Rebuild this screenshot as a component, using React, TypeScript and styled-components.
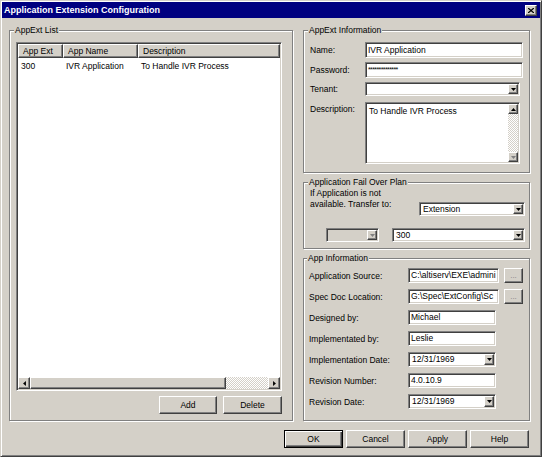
import React from 'react';
import styled, { createGlobalStyle, css } from 'styled-components';

const FACE = '#d4d0c8';
const SHADOW = '#808080';
const DARK = '#404040';

const GlobalStyle = createGlobalStyle`
  html, body {
    margin: 0;
    padding: 0;
    background: #fff;
  }
  body {
    font-family: "Liberation Sans", Arial, sans-serif;
    font-size: 8.5px;
    color: #000;
  }
  * {
    box-sizing: border-box;
  }
`;

const raised = css`
  background: ${FACE};
  border-style: solid;
  border-width: 1px;
  border-color: #fff ${DARK} ${DARK} #fff;
  box-shadow: inset -1px -1px 0 ${SHADOW};
`;

const sunken = css`
  border-style: solid;
  border-width: 1px;
  border-color: ${SHADOW} #fff #fff ${SHADOW};
  box-shadow: inset 1px 1px 0 ${DARK}, inset -1px -1px 0 ${FACE};
`;

const checker = css`
  background: repeating-conic-gradient(#fff 0 25%, ${FACE} 0 50%) 0 0 / 2px 2px;
`;

function Arrow({ dir, off }: { dir: 'up' | 'down' | 'left' | 'right'; off?: boolean }) {
  const pts = {
    down: '0,0 7,0 3.5,4',
    up: '0,4 7,4 3.5,0',
    left: '4,0 4,7 0,3.5',
    right: '0,0 0,7 4,3.5',
  }[dir];
  const vertical = dir === 'up' || dir === 'down';
  return (
    <svg
      width={vertical ? 5 : 3}
      height={vertical ? 3 : 5}
      viewBox={vertical ? '0 0 7 4' : '0 0 4 7'}
      style={{ display: 'block' }}
    >
      <polygon points={pts} fill={off ? SHADOW : '#000'} />
    </svg>
  );
}

const Window = styled.div`
  width: 542px;
  height: 457px;
  background: ${FACE};
  border-style: solid;
  border-width: 1px;
  border-color: ${FACE} ${DARK} ${DARK} ${FACE};
  box-shadow: inset 1px 1px 0 #fff, inset -1px -1px 0 ${SHADOW};
  padding: 1px;
  display: flex;
  flex-direction: column;
`;

const TitleBar = styled.div`
  height: 16px;
  background: #000080;
  display: flex;
  align-items: center;
  justify-content: space-between;
  padding: 0 3px 0 2px;
`;

const Title = styled.span`
  color: #fff;
  font-weight: bold;
  font-size: 9px;
`;

const CloseBtn = styled.div`
  ${raised};
  width: 12px;
  height: 11px;
  display: flex;
  align-items: center;
  justify-content: center;
`;

const Body = styled.div`
  padding: 7px 10px 0 7px;
  display: flex;
  flex-direction: column;
`;

const Main = styled.div`
  display: flex;
  gap: 10px;
`;

const Group = styled.fieldset<{ $w: number; $h: number; $pad: string }>`
  margin: 0;
  min-width: 0;
  width: ${(p) => p.$w}px;
  height: ${(p) => p.$h}px;
  padding: ${(p) => p.$pad};
  border: 1px solid ${SHADOW};
  box-shadow: inset 1px 1px 0 #fff, 1px 1px 0 #fff;
  display: flex;
  flex-direction: column;
`;

const Legend = styled.legend`
  font-size: 8.5px;
  line-height: 10px;
  padding: 0 1px;
  margin-left: -2px;
  background: ${FACE};
`;

const RightCol = styled.div`
  display: flex;
  flex-direction: column;
  gap: 4px;
`;

/* list view */

const ListBox = styled.div`
  ${sunken};
  background: #fff;
  flex: 1;
  min-height: 0;
  padding: 1px;
  display: flex;
  flex-direction: column;
`;

const Cols = css`
  display: grid;
  grid-template-columns: 45px 75px 1fr;
`;

const HeaderRow = styled.div`
  ${Cols};
  height: 14px;
`;

const HeaderCell = styled.div`
  ${raised};
  padding-left: 4px;
  line-height: 12px;
  white-space: nowrap;
  overflow: hidden;
`;

const ListRow = styled.div`
  ${Cols};
  height: 13px;
  line-height: 13px;
  margin-top: 2px;
`;

const ListCell = styled.div`
  padding-left: 3px;
  white-space: nowrap;
`;

const Filler = styled.div`
  flex: 1;
`;

const HScroll = styled.div`
  display: flex;
  height: 12px;
`;

const ScrollBtn = styled.div<{ $w?: number; $h?: number }>`
  ${raised};
  width: ${(p) => (p.$w ? `${p.$w}px` : 'auto')};
  height: ${(p) => (p.$h ? `${p.$h}px` : 'auto')};
  flex-shrink: 0;
  display: flex;
  align-items: center;
  justify-content: center;
`;

const Thumb = styled.div<{ $size: number }>`
  ${raised};
  flex: 0 0 ${(p) => p.$size}px;
`;

const Track = styled.div`
  ${checker};
  flex: 1;
`;

const ButtonRow = styled.div<{ $gap: number }>`
  display: flex;
  justify-content: flex-end;
  gap: ${(p) => p.$gap}px;
  margin-top: 5px;
`;

const Btn = styled.button<{ $w: number; $default?: boolean }>`
  ${raised};
  width: ${(p) => p.$w}px;
  height: 18px;
  padding: 0;
  font: inherit;
  font-size: 8.5px;
  color: #000;
  ${(p) =>
    p.$default &&
    css`
      border-color: #000;
      box-shadow: inset 1px 1px 0 #fff, inset -1px -1px 0 ${DARK},
        inset -2px -2px 0 ${SHADOW};
    `}
`;

/* form parts */

const FormGrid = styled.div<{ $cols: string; $rows: string; $gap: number }>`
  display: grid;
  grid-template-columns: ${(p) => p.$cols};
  grid-template-rows: ${(p) => p.$rows};
  row-gap: ${(p) => p.$gap}px;
  align-items: center;
`;

const Label = styled.div<{ $top?: boolean }>`
  white-space: nowrap;
  align-self: ${(p) => (p.$top ? 'start' : 'center')};
  padding-top: ${(p) => (p.$top ? '4px' : '0')};
`;

const Field = styled.div<{ $w?: number; $h: number }>`
  ${sunken};
  background: #fff;
  width: ${(p) => (p.$w ? `${p.$w}px` : 'auto')};
  height: ${(p) => p.$h}px;
  padding: 0 2px 0 2px;
  line-height: ${(p) => p.$h - 2}px;
  white-space: nowrap;
  overflow: hidden;
`;

const Stars = styled.span`
  font-size: 7px;
  letter-spacing: -0.6px;
  vertical-align: top;
`;

const Combo = styled.div<{ $w?: number; $h: number; $off?: boolean; $mr?: number; $mt?: number }>`
  ${sunken};
  background: ${(p) => (p.$off ? FACE : '#fff')};
  width: ${(p) => (p.$w ? `${p.$w}px` : 'auto')};
  height: ${(p) => p.$h}px;
  margin-right: ${(p) => p.$mr || 0}px;
  margin-top: ${(p) => p.$mt || 0}px;
  padding: 1px;
  display: flex;
`;

const ComboText = styled.div`
  flex: 1;
  padding-left: 2px;
  line-height: 10px;
  white-space: nowrap;
  overflow: hidden;
`;

const DropBtn = styled.div`
  ${raised};
  width: 10px;
  display: flex;
  align-items: center;
  justify-content: center;
`;

const Memo = styled.div`
  ${sunken};
  background: #fff;
  height: 62px;
  margin: 2px 3px 0 0;
  align-self: start;
  padding: 1px;
  display: flex;
`;

const MemoText = styled.div`
  flex: 1;
  padding: 2px 2px;
`;

const VScroll = styled.div`
  width: 10px;
  display: flex;
  flex-direction: column;
`;

const FailRow = styled.div<{ $indent?: number; $mt?: number }>`
  display: flex;
  align-items: flex-start;
  justify-content: space-between;
  gap: 13px;
  padding-left: ${(p) => p.$indent || 0}px;
  margin-top: ${(p) => p.$mt || 0}px;
`;

const Prompt = styled.div`
  line-height: 11px;
`;

const BrowseBtn = styled.button`
  ${raised};
  justify-self: end;
  height: 15px;
  width: 19px;
  padding: 0;
  font: inherit;
  font-size: 8px;
  line-height: 10px;
  color: ${SHADOW};
`;

const Footer = styled.div`
  display: flex;
  justify-content: flex-end;
  gap: 3px;
  margin-top: 9px;
  padding-right: 1px;
`;

function DropCombo({
  text,
  w,
  h,
  off,
  mr,
  mt,
}: {
  text?: string;
  w?: number;
  h: number;
  off?: boolean;
  mr?: number;
  mt?: number;
}) {
  return (
    <Combo $w={w} $h={h} $off={off} $mr={mr} $mt={mt}>
      <ComboText>{text}</ComboText>
      <DropBtn>
        <Arrow dir="down" off={off} />
      </DropBtn>
    </Combo>
  );
}

// the two paths are shown cut at the field edge, as the dialog shows them
const appInfo: { label: string; value: string; kind: 'browse' | 'text' | 'date' }[] = [
  { label: 'Application Source:', value: 'C:\\altiserv\\EXE\\admini', kind: 'browse' },
  { label: 'Spec Doc Location:', value: 'G:\\Spec\\ExtConfig\\Sc', kind: 'browse' },
  { label: 'Designed by:', value: 'Michael', kind: 'text' },
  { label: 'Implementated by:', value: 'Leslie', kind: 'text' },
  { label: 'Implementation Date:', value: '12/31/1969', kind: 'date' },
  { label: 'Revision Number:', value: '4.0.10.9', kind: 'text' },
  { label: 'Revision Date:', value: '12/31/1969', kind: 'date' },
];

export default function App() {
  return (
    <>
      <GlobalStyle />
      <Window>
        <TitleBar>
          <Title>Application Extension Configuration</Title>
          <CloseBtn>
            <svg width="6" height="5" viewBox="0 0 6 5" style={{ display: 'block' }}>
              <path d="M0 0 L6 5 M6 0 L0 5" stroke="#000" strokeWidth="1.3" />
            </svg>
          </CloseBtn>
        </TitleBar>
        <Body>
          <Main>
            <Group $w={284} $h={396} $pad="7px 10px 6px 6px">
              <Legend>AppExt List</Legend>
              <ListBox>
                <HeaderRow>
                  <HeaderCell>App Ext</HeaderCell>
                  <HeaderCell>App Name</HeaderCell>
                  <HeaderCell>Description</HeaderCell>
                </HeaderRow>
                <ListRow>
                  <ListCell>300</ListCell>
                  <ListCell>IVR Application</ListCell>
                  <ListCell>To Handle IVR Process</ListCell>
                </ListRow>
                <Filler />
                <HScroll>
                  <ScrollBtn $w={12}>
                    <Arrow dir="left" />
                  </ScrollBtn>
                  <Thumb $size={196} />
                  <Track />
                  <ScrollBtn $w={12}>
                    <Arrow dir="right" />
                  </ScrollBtn>
                </HScroll>
              </ListBox>
              <ButtonRow $gap={6}>
                <Btn $w={58}>Add</Btn>
                <Btn $w={59}>Delete</Btn>
              </ButtonRow>
            </Group>

            <RightCol>
              <Group $w={227} $h={148} $pad="7px 6px 0 6px">
                <Legend>AppExt Information</Legend>
                <FormGrid $cols="55px 1fr" $rows="16px 16px 14px 64px" $gap={4}>
                  <Label>Name:</Label>
                  <Field $h={16}>IVR Application</Field>
                  <Label>Password:</Label>
                  <Field $h={16}>
                    <Stars>**************</Stars>
                  </Field>
                  <Label>Tenant:</Label>
                  <DropCombo h={14} mr={3} />
                  <Label $top>Description:</Label>
                  <Memo>
                    <MemoText>To Handle IVR Process</MemoText>
                    <VScroll>
                      <ScrollBtn $h={10}>
                        <Arrow dir="up" />
                      </ScrollBtn>
                      <Track />
                      <ScrollBtn $h={10}>
                        <Arrow dir="down" off />
                      </ScrollBtn>
                    </VScroll>
                  </Memo>
                </FormGrid>
              </Group>

              <Group $w={227} $h={72} $pad="1px 4px 0 6px">
                <Legend>Application Fail Over Plan</Legend>
                <FailRow>
                  <Prompt>
                    If Application is not
                    <br />
                    available. Transfer to:
                  </Prompt>
                  <DropCombo text="Extension" w={106} h={14} mt={14} />
                </FailRow>
                <FailRow $indent={16} $mt={12}>
                  <DropCombo w={53} h={14} off />
                  <div style={{ flex: 1 }}>
                    <DropCombo text="300" h={14} />
                  </div>
                </FailRow>
              </Group>

              <Group $w={227} $h={168} $pad="5px 6px 0 5px">
                <Legend>App Information</Legend>
                <FormGrid $cols="99px 91px 1fr" $rows="repeat(7, 15px)" $gap={6}>
                  {appInfo.map((row) => (
                    <React.Fragment key={row.label}>
                      <Label>{row.label}</Label>
                      {row.kind === 'browse' && (
                        <>
                          <Field $h={15}>{row.value}</Field>
                          <BrowseBtn>...</BrowseBtn>
                        </>
                      )}
                      {row.kind === 'text' && (
                        <>
                          <Field $h={15} $w={88}>
                            {row.value}
                          </Field>
                          <span />
                        </>
                      )}
                      {row.kind === 'date' && (
                        <>
                          <DropCombo text={row.value} w={88} h={15} />
                          <span />
                        </>
                      )}
                    </React.Fragment>
                  ))}
                </FormGrid>
              </Group>
            </RightCol>
          </Main>
          <Footer>
            <Btn $w={59} $default>
              OK
            </Btn>
            <Btn $w={59}>Cancel</Btn>
            <Btn $w={59}>Apply</Btn>
            <Btn $w={59}>Help</Btn>
          </Footer>
        </Body>
      </Window>
    </>
  );
}
